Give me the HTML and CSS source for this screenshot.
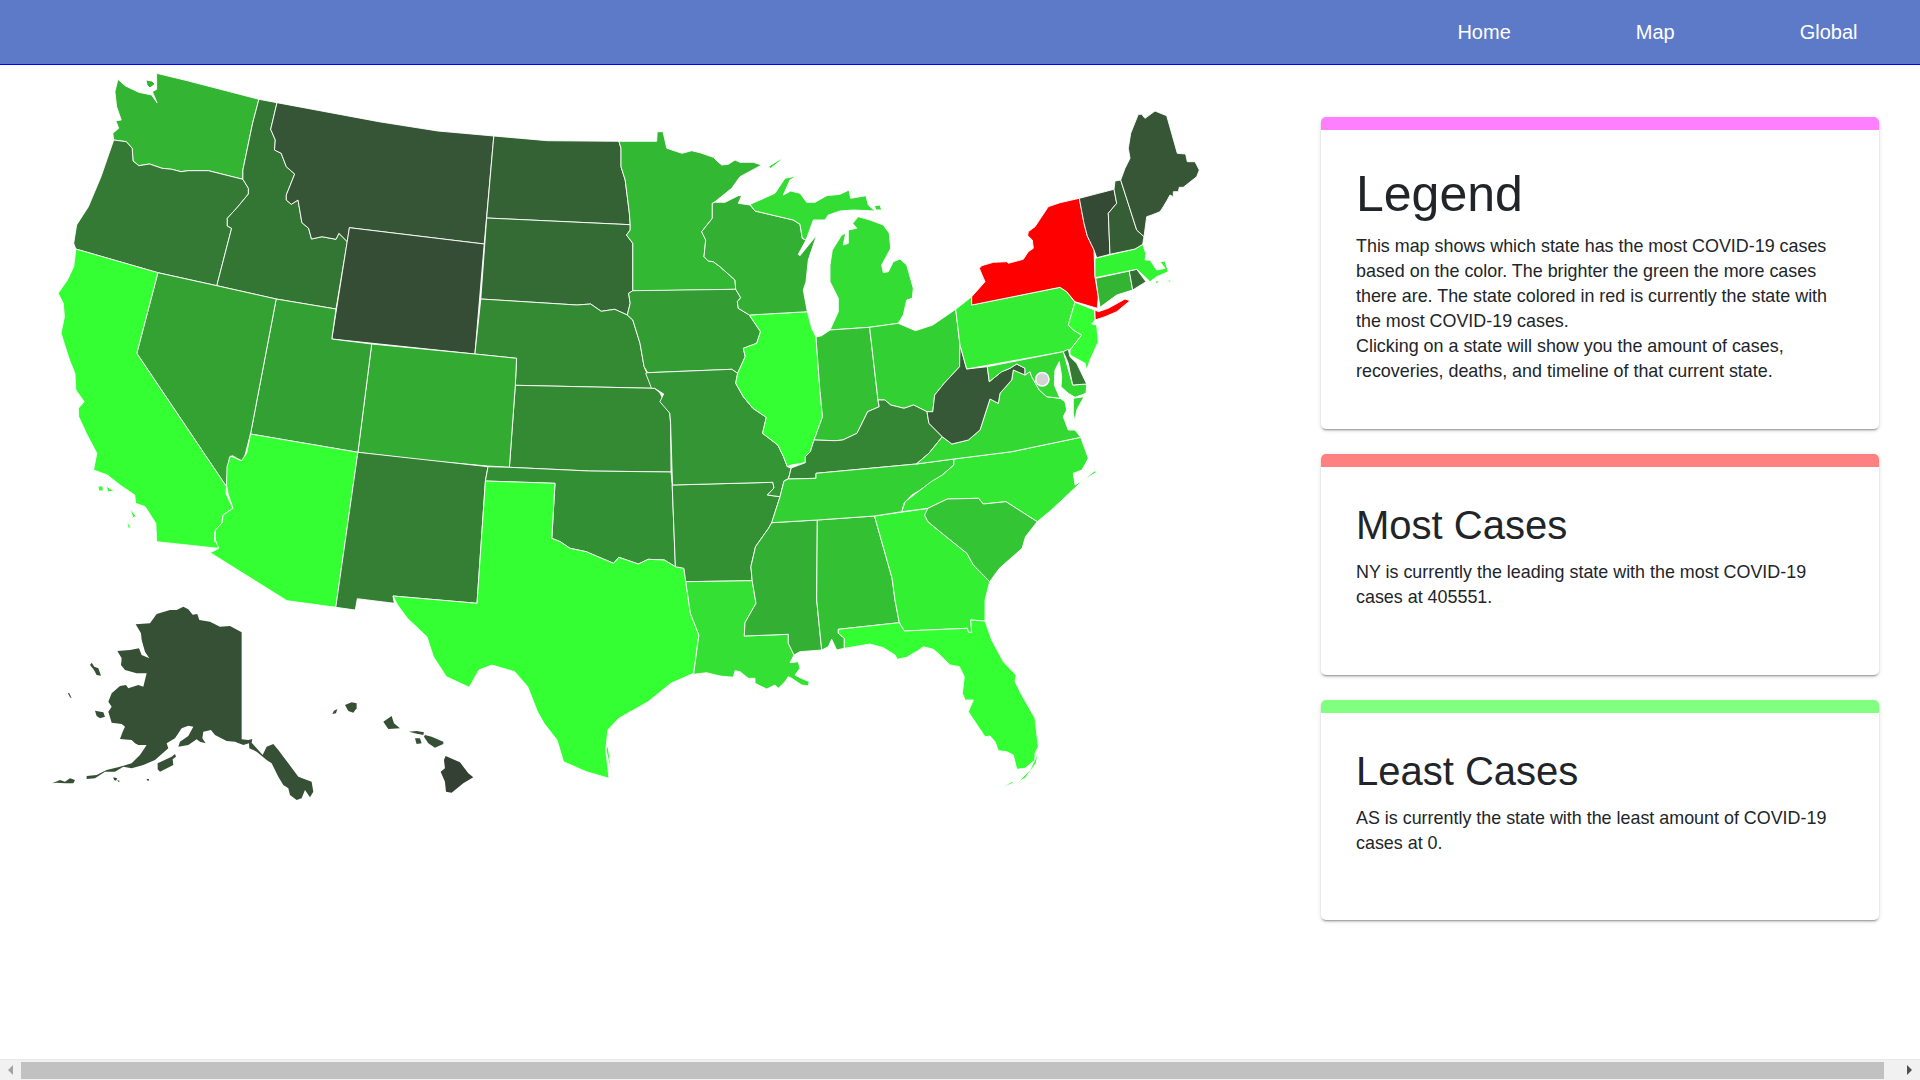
FILE: index.html
```html
<!DOCTYPE html>
<html lang="en">
  <head>
    <meta charset="UTF-8" />
    <meta name="viewport" content="width=device-width, initial-scale=1.0" />
    <title>COVID-19 Map</title>
    <link rel="stylesheet" href="styles.css">
  </head>
  <body>
    <!-- Top navigation -->
    <nav class="navbar">
      <a class="nav-link" href="#">Home</a>
      <a class="nav-link" href="#">Map</a>
      <a class="nav-link" href="#">Global</a>
    </nav>

    <main class="content">
      <!-- US map, coordinates are page pixels (hand traced) -->
      <div class="map-wrap">
        <svg class="map" viewBox="0 65 1321 800" xmlns="http://www.w3.org/2000/svg">
          <polygon class="state wa" points="156.6,73.3 187.3,80.7 258.9,99.3 252.6,123.3 242.9,170 242.9,179.3 208.4,170.7 188.2,170.7 181,171.7 171.8,169.3 162,168.3 149.5,164 138.9,165.7 133,161 132.2,148.3 126.3,141.7 113.7,140 112.8,133.3 118.7,128.3 115.8,120.7 121.2,120 116.6,106.7 114.9,91.7 117.9,79.3 125.5,86 138.9,92.3 151.6,95 157,102.7 152.4,91.7 156.6,89.3" />
          <polygon class="state wa" points="146,80 152,81 155,84 150,88 147,85" />
          <polygon class="state or" points="113.7,140 126.3,141.7 132.2,148.3 133,161 138.9,165.7 149.5,164 162,168.3 171.8,169.3 181,171.7 188.2,170.7 208.4,170.7 242.9,179.3 248.4,188.3 248.4,194 237.9,206.7 227.3,218.3 227.3,226 231.6,228.3 216.8,285.7 157.9,272.7 75.8,249 73.7,243.3 76.6,225 88.4,206.7 101,176.7" />
          <polygon class="state id" points="258.9,99.3 277,102.7 270.7,129.3 275.3,140 274.5,150 281.2,153.3 286.3,166.7 294.7,174 286.3,195 286.3,200 291.3,204.3 298,200 301.9,222.7 308.6,228.3 311.5,239 322,236.7 336,239.3 338.9,233.3 347.3,241.7 336,309 276.2,299 216.8,285.7 231.6,228.3 227.3,226 227.3,218.3 237.9,206.7 248.4,194 248.4,188.3 242.9,179.3 242.9,170 252.6,123.3" />
          <polygon class="state mt" points="277,102.7 378.9,121.7 437.8,131 493.8,136 484.2,244 349.4,227.7 347.3,241.7 338.9,233.3 336,239.3 322,236.7 311.5,239 308.6,228.3 301.9,222.7 298,200 291.3,204.3 286.3,200 286.3,195 294.7,174 286.3,166.7 281.2,153.3 274.5,150 275.3,140 270.7,129.3" />
          <polygon class="state wy" points="349.4,227.7 484.2,244 474.9,354 331.8,339" />
          <polygon class="state nd" points="493.8,136 547.3,140.7 618.9,141.3 621,148.3 621,166.7 625.2,180 629.4,213.3 630.2,224.7 486.7,218" />
          <polygon class="state sd" points="486.7,218 630.2,224.7 630.2,230 626.5,235 632.8,243.3 632.8,290.7 628.6,293.3 630.2,303.3 627.3,315 614.7,309.3 601.2,311.3 590.7,304 576.8,305 480.8,299" />
          <polygon class="state ne" points="480.8,299 576.8,305 590.7,304 601.2,311.3 614.7,309.3 627.3,315 632.8,320 640,343.3 644.1,366.7 648.3,376.7 654.7,388.3 515.3,385.3 516.6,358.3 474.9,354" />
          <polygon class="state ks" points="515.3,385.3 654.7,388.3 660,393 669.8,413.3 670.6,423.3 671,472 589.4,471 509.4,467.3" />
          <polygon class="state co" points="371.7,344 474.9,354 516.6,358.3 515.3,385.3 509.4,467.3 487.5,466 421,460 357.9,452.3" />
          <polygon class="state ut" points="276.2,299 336,309 331.8,339 371.7,344 357.9,452.3 250.5,434" />
          <polygon class="state nv" points="157.9,272.7 216.8,285.7 276.2,299 250.5,434 244.2,458.3 242,461 232.4,455.7 229.4,457.3 226.5,486.7 136.8,353.3" />
          <polygon class="state ca" points="75.8,249 157.9,272.7 136.8,353.3 226.5,486.7 226,493.3 232.8,508.3 223.1,515 221,526.7 214.7,531.7 214.7,541.7 219.8,542.7 218,548.3 156.6,541.7 155.8,523.3 145.2,506.7 135.6,503.3 134.7,495 120,485 107.4,475 93.5,470 96.8,453.3 86.3,433.3 78.7,416.7 78.3,408.3 84.2,401.7 75.8,390 74.9,373.3 69.5,360 61,333.3 64.4,316.7 63.2,303.3 58.1,293.3 67.4,280 73.7,266.7" />
          <polygon class="state ca" points="98,486 103,486 103,491 99,491" />
          <polygon class="state ca" points="106,486 114,491 108,492" />
          <polygon class="state ca" points="130,509 136,516 133,518" />
          <polygon class="state ca" points="127,521 131,528 128,528" />
          <polygon class="state az" points="250.5,434 357.9,452.3 335.8,607.3 287,600.7 210.2,552.7 218.7,548.3 215.4,540 215.4,530 222,523 223.2,515 233,508.3 228.4,495 226.5,485 227,466.7 230.4,456 241.5,460.7 246.7,453" />
          <polygon class="state nm" points="357.9,452.3 488,466.7 485.4,481 477,603.3 393,596 394.3,603.3 357.3,598.7 355.3,610 335.8,607.3" />
          <polygon class="state ok" points="488,466.7 509.4,467.3 589.4,471 671,472 672.2,485 675.4,566.7 664.3,560 648.1,559.3 638.3,564 618.8,557.3 613.6,563.3 599.3,557.3 586.3,551.7 570,548.3 560.3,541.7 551.8,538.3 555,483.3 485.4,481" />
          <polygon class="state tx" points="485.4,481 555,483.3 551.8,538.3 560.3,541.7 570,548.3 586.3,551.7 599.3,557.3 613.6,563.3 618.8,557.3 638.3,564 648.1,559.3 664.3,560 675.4,566.7 683.9,568.3 685.8,581.7 690.4,613.3 698.9,635 693.6,673.3 670.9,683.3 648.1,701.7 618.8,718.3 607.8,730 605.8,750 609,778.3 586.3,771.7 563.5,761.7 557,740 544,723.3 537.5,711.7 527.7,686.7 514.7,671.7 491.9,665 478.9,670 469.2,687.3 446.4,676.7 433.4,656.7 426.9,636.7 407.4,618.3 397.6,605 393,596 477,603.3" />
          <polygon class="state tx" points="618.8,720 608,745 612,776 606,750" />
          <polygon class="state ar" points="672.2,485 772.8,482.3 774,488 767.4,495 780,496.7 771.7,522.7 768.5,528.3 755.5,546.7 750.9,566.7 752.2,580.7 685.8,581.7 683.9,568.3 675.4,566.7" />
          <polygon class="state la" points="685.8,581.7 752.2,580.7 756,603.3 745,622.7 744.3,636 788.3,634.3 788.3,643.3 794,655 790,662.7 798.3,661.7 800,668.3 795,675 800,677.7 809.3,681.7 808.3,686 801.7,685 791.7,678.3 788.3,676.7 785,681.7 778.3,688.3 775,685 766.7,689 755,683.3 755,678.3 748.3,678.3 740,671.7 735,670.7 733.3,677.3 720,676 706.6,672.7 693.6,674.3 698.9,635 690.4,613.3" />
          <polygon class="state ms" points="771.7,522.7 817.3,520 816.7,600 821.7,650 800,651.7 794,655 788.3,643.3 788.3,634.3 744.3,636 745,622.7 756,603.3 752.2,580.7 750.9,566.7 755.5,546.7 768.5,528.3" />
          <polygon class="state al" points="817.3,520 874.5,516 892.1,578.3 895,600 899.3,622.7 838.3,629.3 838.3,633.3 844.3,638.3 844.3,648.3 836.7,650 831.7,639.3 828.3,646.7 821.7,650 816.7,600" />
          <polygon class="state ga" points="874.5,516 929.2,508.3 924.6,515 927.9,521.7 944.1,535 966.9,553.3 973.4,565 989.7,581.7 985.1,600 985,621 970.7,620 971.7,632.3 968.3,632.3 967.3,628.3 904.3,631 899.3,622.7 895,600 892.1,578.3" />
          <polygon class="state fl" points="838.3,629.3 899.3,622.7 904.3,631 967.3,628.3 968.3,632.3 971.7,632.3 970.7,620 985,621 991.7,640 1003.3,661.7 1016,675 1015,681.7 1021.7,695 1035,718.3 1038.3,746.7 1035,753.3 1035,760 1025,768.3 1016.7,769.3 1013.3,755 1006.7,751.7 998.3,750.7 995,741.7 990,736 985,736.7 968.3,711.7 973.3,700 966,700 968.3,707.3 962.3,693.3 964.3,676.7 959.3,666.7 950,665 940,655 933.3,649.3 923.3,646.7 919,650 906.7,657.3 897.3,659.3 895,655 883.3,647.7 870,644 844.3,648.3 844.3,638.3 838.3,633.3" />
          <polygon class="state fl" points="1038.3,752 1036,763.3 1025,778.3 1018.3,781.7 1030,770" />
          <polygon class="state fl" points="1001.7,787.7 1011.7,781.7 1014,782.7 1006,786" />
          <polygon class="state mn" points="618.9,141.3 656.6,141.3 657.2,131.7 663,131.7 666.8,148.3 682,153.3 691.7,150.7 700,152.7 713.3,157.3 716,160 721.7,165 728.3,164.3 735,160 740,162.3 753.3,162.3 761.7,165 740,176.7 731.7,188.3 715,201.7 712.3,203.3 712.3,218.3 701.7,231.7 705.7,240 704,256.7 708.3,261 713.3,261.7 720,266.7 735,280 735.7,289.3 640,291 632.8,290.7 632.8,243.3 626.5,235 630.2,230 630.2,224.7 629.4,213.3 625.2,180 621,166.7 621,148.3" />
          <polygon class="state mi-isle" points="768.3,166.7 781.7,158.3 780,161 770.7,168.3" />
          <polygon class="state ia" points="628.6,293.3 632.8,290.7 735.7,289.3 740.7,297.7 737.3,301.7 738.3,308.3 749.3,315 760.5,331.7 756.7,343.3 743.3,348.3 745.2,356.7 737.6,373.3 731.8,369.3 647.7,372.7 644.1,366.7 640,343.3 632.8,320 627.3,315 630.2,303.3" />
          <polygon class="state mo" points="647.7,372.7 731.8,369.3 737.6,373.3 735.7,383.3 743.3,396.7 752.9,408.3 766.3,417.3 762.5,433.3 777.8,445 783.5,456.7 787.3,466.7 791.2,468 788.5,478.3 784,481 780,496.7 767.4,495 774,488 772.8,482.3 672.5,485 670.6,423.3 669.8,413.3 659.9,401.7 663.7,394 654.7,388.3 651.5,388.3 645.7,373.3" />
          <polygon class="state il" points="749.3,315 807.3,311.7 811.7,328.3 816,337 819.9,390 822.5,416.7 814.1,440 810.3,451.7 805.3,456.7 805.3,462.7 791.2,465 787.3,466.7 783.5,456.7 777.8,445 762.5,433.3 766.3,417.3 752.9,408.3 743.3,396.7 735.7,383.3 737.6,373.3 745.2,356.7 743.3,348.3 756.7,343.3 760.5,331.7" />
          <polygon class="state wi" points="712.3,203.3 715,202.3 725,202.3 738.3,195.7 741.7,195.7 738.3,203.3 750,205 755,211 793.3,220 800,224.3 802.3,238.3 806,240 798.3,254.3 800,255.7 816.7,235 808.3,260 806,281.7 803.3,290 807.3,311.7 749.3,315 738.3,308.3 737.3,301.7 740.7,297.7 735.7,289.3 735,280 720,266.7 713.3,261.7 708.3,261 704,256.7 705.7,240 701.7,231.7 712.3,218.3" />
          <polygon class="state mi" points="750,204.3 760,200 775,193.3 785,178.3 796.7,176 790,180 783.3,195 790.7,191 800,193.3 806.7,202.3 815,202.3 826.7,195.7 840,194.3 849,190 850.7,198.3 866,195.7 868.3,205 875,211 853.3,210 840,211 828.3,215 825,220 813.3,220 806,240 802.3,238.3 800,224.3 793.3,220 755,211" />
          <polygon class="state mi" points="874.3,205.7 880,205 881.7,210 876,210" />
          <polygon class="state mi" points="852.7,223.3 858.3,216.7 870,220 883.3,225 889.3,233.3 890.7,248.3 881.7,265 883.3,272.7 888.3,271.7 893.3,261.7 900,259 906.7,265 913.3,288.3 912.3,298.3 906.7,300 903.3,315 898.3,323.3 869.6,327.3 830,330 838.3,311.7 838.3,298.3 830,281.7 830,265 832.3,250 841.7,235 845.7,233.3 843.3,245 848.3,243.3 848.3,230 856.7,228.3" />
          <polygon class="state in" points="816,337 821.7,335.7 830,330 869.6,327.3 878,400 879.2,406.7 867.7,411.7 857,433.3 842.8,440 835.2,440.7 814.1,440 822.5,416.7 819.9,390" />
          <polygon class="state oh" points="869.6,327.3 898.3,323.3 915.5,330.7 932.8,325 955.7,309.3 960,345 959.6,366.7 944.2,383.3 934.7,395 932.8,411.7 927,411.7 913.6,405 904,408.3 890.7,405 884.9,400 878,400" />
          <polygon class="state ky" points="878,400 884.9,400 890.7,405 904,408.3 913.6,405 927,411.7 928.9,423.3 942.3,436.7 928.9,453.3 916.3,464 816,473.3 816,478.3 788.5,479 791.2,468 805.3,462.7 805.3,456.7 810.3,451.7 814.1,440 835.2,440.7 842.8,440 857,433.3 867.7,411.7 879.2,406.7" />
          <polygon class="state tn" points="788.5,479 816,478.3 816,473.3 916.3,464 953.8,459 953.8,465 942.3,475 928.9,485 911.7,495 904,503.3 901.8,511.7 874.5,516 817.3,520 771.7,522.7 780,496.7 784,481" />
          <polygon class="state nc" points="953.8,459 1011.7,451.7 1080.7,437.3 1088.3,458.3 1082,470 1073.3,473.3 1075,485 1083.3,480 1051.4,510 1037.2,521.7 1006,501.7 983.2,504 978.6,498.3 947.4,499 927.9,508.3 901.8,511.7 905.1,501.7 931.1,481.7 942.3,475 953.8,465" />
          <polygon class="state nc" points="1092.7,456.7 1096,472.7 1083.3,480 1095,470.7" />
          <polygon class="state sc" points="927.9,508.3 947.4,499 978.6,498.3 983.2,504 1006,501.7 1037.2,521.7 1025.5,536.7 1022.1,548.3 999.4,568.3 989.7,581.7 973.4,565 966.9,553.3 944.1,535 927.9,521.7 924.6,515" />
          <polygon class="state va" points="916.3,464 928.9,453.3 942.3,436.7 951.9,444 968.3,440 980,430 990,399 998.3,403.3 1000,393.3 1011.7,380 1013.3,370 1025,375 1030,371.7 1031.7,376.7 1039.3,390 1046.7,396.7 1060,398.3 1065,401.7 1066.7,410 1063.3,416.7 1068.3,430 1075,430 1080.7,437.3 1011.7,451.7 953.8,459" />
          <polygon class="state va" points="1073.3,398.3 1084,396.7 1076.7,410 1075,421.7 1073.3,413.3" />
          <polygon class="state wv" points="960,345 966.7,369 987.3,366.7 989.3,381.7 1001.7,371.7 1010,368.3 1016.7,364 1025,368.3 1025,375 1013.3,370 1011.7,380 1000,393.3 998.3,403.3 990,399 980,430 968.3,440 951.9,444 942.3,436.7 928.9,423.3 927,411.7 932.8,411.7 934.7,395 944.2,383.3 959.6,366.7" />
          <polygon class="state pa" points="955.7,309.3 971.7,296.7 971.7,305 1060,287.3 1066.7,291.7 1075,302.3 1071.7,313.3 1068.3,325 1073.3,330 1081.7,335 1070,350 1063.3,351.7 966.7,369 960,345" />
          <polygon class="state ny" points="971.7,305 971.7,296.7 985,281.7 979.3,268.3 981.7,265.7 993.3,262.3 1006.7,261.7 1008.3,263.3 1023.3,259.3 1028.3,251.7 1033.3,248.3 1032.3,240 1027.7,235.7 1028.3,231.7 1035,226.7 1048.3,206.7 1060,202.7 1079.3,198.3 1084,223.3 1087.3,236 1094,250 1095,276.7 1098.3,296.7 1097.3,308.3 1075,301.7 1066.7,291.7 1060,287.3" />
          <polygon class="state ny" points="1095,320 1095,310 1098.3,311.7 1108.3,308.3 1125,299 1130,300.7 1116.7,311.7 1105,316.7" />
          <polygon class="state nj" points="1075,302.3 1094.3,310 1095,320 1091.7,324 1096.7,325 1098.3,341.7 1090,360 1086.7,370 1085,363.3 1070,355 1070,350 1081.7,335 1073.3,330 1068.3,325 1071.7,313.3" />
          <polygon class="state md" points="987.3,366.7 1063.3,351.7 1072.7,385 1086.7,384 1086,393.3 1075,397.3 1068.3,393.3 1061,386.7 1061.7,376.7 1059.3,361.7 1055,370 1054.3,385 1060,398.3 1046.7,396.7 1039.3,390 1031.7,376.7 1030,371.7 1025,375 1025,368.3 1016.7,364 1010,368.3 1001.7,371.7 989.3,381.7" />
          <polygon class="state de" points="1063.3,351.7 1068.3,349.3 1070,356.7 1076.7,363.3 1086.7,384 1072.7,385 1068.3,363.3" />
          <circle class="state dc" cx="1042.3" cy="379.3" r="6.7" />
          <polygon class="state ct" points="1095.7,278.3 1129.3,271 1132.7,290 1116.7,295 1100,307.3 1098.3,296.7" />
          <polygon class="state ri" points="1129.3,271 1136.7,269.3 1146,281.7 1132.7,290" />
          <polygon class="state ma" points="1095,258.3 1135,249 1142.7,244.3 1146,254 1145,260 1150,260 1156.7,270 1165,268.3 1160,261.7 1165,261 1168.3,271.7 1156.7,276.7 1150,281.7 1146.7,278.3 1136.7,269.3 1095,277.7" />
          <polygon class="state ma" points="1155,281.7 1160,280 1156.7,284" />
          <polygon class="state ma" points="1165,280.7 1170.7,280 1170.7,282.3" />
          <polygon class="state vt" points="1079.3,198.3 1114,189.3 1116.7,203.3 1108.3,213.3 1110,254.3 1096.7,257.7 1094,250 1087.3,236 1084,223.3" />
          <polygon class="state nh" points="1114,189.3 1115,181 1120.7,180 1136.7,230 1144,236.7 1142.7,244.3 1135,249 1110,254.3 1108.3,213.3 1116.7,203.3" />
          <polygon class="state me" points="1120.7,180 1125,168.3 1130,158.3 1128.3,148.3 1130.7,133.3 1138.3,114.3 1141.7,114.3 1145,118.3 1155,111 1166.7,115.7 1177.3,153.3 1185.7,154 1187.3,161.7 1195,161.7 1199.3,170 1196.7,176.7 1183.3,187.3 1179.3,187.3 1178.3,191.7 1173.3,191.7 1173.3,196.7 1170,195 1167.3,200 1163.3,206.7 1160,211.7 1151.7,215 1146.7,216.7 1144,236.7 1136.7,230" />

          <!-- Alaska and Hawaii, traced at 3x -->
          <g transform="translate(40 600) scale(0.3333)">
            <polygon class="ak" points="430,20 445,28 458,44 472,42 478,60 510,65 540,80 570,78 605,97 605,418 625,420 637,417 635,428 668,465 680,440 700,432 715,450 745,490 775,530 815,545 820,575 810,592 795,570 785,595 770,600 750,585 745,565 730,555 715,530 695,490 680,480 650,455 628,445 627,430 610,435 585,425 560,423 525,405 513,390 490,395 487,415 497,430 480,425 470,418 445,435 415,440 420,425 445,408 460,380 445,377 425,385 405,415 380,430 385,445 345,480 310,495 275,505 250,500 225,515 195,515 165,535 140,537 140,528 170,525 200,510 240,500 275,490 300,465 320,435 295,435 285,430 275,420 240,417 248,395 255,380 245,372 215,368 205,335 215,320 205,305 215,280 240,258 258,255 265,265 295,255 310,260 320,220 290,220 255,210 243,195 245,175 232,153 270,150 297,145 305,165 328,175 315,155 305,120 303,100 287,73 330,70 350,42 390,30 410,30" />
            <polygon class="ak" points="150,195 155,188 163,200 175,205 183,227 170,225 162,210" />
            <polygon class="ak" points="83,278 88,280 95,295 90,292" />
            <polygon class="ak" points="165,332 190,337 195,350 180,355 170,348" />
            <polygon class="ak" points="353,490 395,470 405,462 408,470 398,478 400,495 360,515 353,508" />
            <polygon class="ak" points="37,550 60,540 75,545 90,535 105,540 100,550 75,550 50,548" />
            <polygon class="ak" points="220,532 232,535 228,542 222,540" />
            <polygon class="ak" points="232,540 240,543 235,546" />
            <polygon class="ak" points="320,537 327,537 326,543 321,541" />
            <polygon class="hi" points="1217,468 1260,487 1285,520 1300,532 1270,550 1235,578 1218,575 1215,545 1202,515 1215,505 1212,480" />
            <polygon class="hi-small" points="1155,405 1175,410 1210,425 1210,432 1185,443 1165,430 1152,410" />
            <polygon class="hi-small" points="1125,415 1140,415 1145,430 1130,432" />
            <polygon class="hi-small" points="1107,395 1130,393 1152,397 1150,405 1125,400" />
            <polygon class="hi-small" points="1055,348 1062,370 1080,385 1045,387 1030,365" />
            <polygon class="hi-small" points="915,315 935,307 950,310 950,325 940,338 925,333" />
            <polygon class="hi-small" points="882,332 892,327 888,340 877,342" />
          </g>
        </svg>
      </div>

      <!-- Info cards -->
      <aside class="sidebar">
        <section class="card card-legend">
          <div class="card-bar bar-pink"></div>
          <div class="card-body">
            <h1 class="card-title-lg">Legend</h1>
            <p class="card-text">
              This map shows which state has the most COVID-19 cases based on the color. The brighter the green the more cases there are. The state colored in red is currently the state with the most COVID-19 cases.<br />
              Clicking on a state will show you the amount of cases, recoveries, deaths, and timeline of that current state.
            </p>
          </div>
        </section>

        <section class="card card-stat">
          <div class="card-bar bar-red"></div>
          <div class="card-body">
            <h2 class="card-title">Most Cases</h2>
            <p class="card-text">NY is currently the leading state with the most COVID-19 cases at 405551.</p>
          </div>
        </section>

        <section class="card card-stat">
          <div class="card-bar bar-green"></div>
          <div class="card-body">
            <h2 class="card-title">Least Cases</h2>
            <p class="card-text">AS is currently the state with the least amount of COVID-19 cases at 0.</p>
          </div>
        </section>
      </aside>
    </main>

    <!-- Horizontal scrollbar of the page -->
    <div class="scrollbar">
      <div class="sb-btn"><span class="sb-arrow-left"></span></div>
      <div class="sb-thumb"></div>
      <div class="sb-btn"><span class="sb-arrow-right"></span></div>
    </div>
  </body>
</html>
```

FILE: styles.css
```css
* {
  box-sizing: border-box;
}
body {
  margin: 0;
  height: 100vh;
  overflow: hidden;
  display: flex;
  flex-direction: column;
  font-family: "Liberation Sans", Arial, sans-serif;
  font-size: 16px;
  color: #212529;
  background-color: #fff;
}

/* Navbar */
.navbar {
  flex: 0 0 65px;
  display: flex;
  justify-content: flex-end;
  align-items: center;
  background-color: #5c7ac8;
  border-bottom: 1px solid #0000ff;
}
.nav-link {
  padding: 0 62.5px;
  color: #fff;
  font-size: 20px;
  text-decoration: none;
}

/* Main area */
.content {
  flex: 1;
  display: flex;
  min-height: 0;
}
.map-wrap {
  flex: 0 0 1321px;
}
.map {
  display: block;
  width: 1321px;
  height: 800px;
}
.sidebar {
  flex: 0 0 558px;
  display: flex;
  flex-direction: column;
  gap: 25px;
  padding-top: 52px;
}

/* Cards */
.card {
  background-color: #fff;
  border-radius: 5px;
  overflow: hidden;
  box-shadow: 0 2px 2px 0 rgba(0, 0, 0, 0.14), 0 3px 1px -2px rgba(0, 0, 0, 0.2), 0 1px 5px 0 rgba(0, 0, 0, 0.12);
}
.card-legend {
  height: 312px;
}
.card-stat {
  height: 220.5px;
}
.card-bar {
  height: 13px;
}
.bar-pink {
  background-color: #ff80ff;
}
.bar-red {
  background-color: #ff8080;
}
.bar-green {
  background-color: #80ff80;
}
.card-body {
  padding: 34px 35px 35px;
}
.card-title-lg,
.card-title {
  margin: 0;
  font-weight: 400;
  line-height: 1.2;
}
.card-title-lg {
  font-size: 50px;
  margin-bottom: 10px;
}
.card-title {
  font-size: 40px;
  margin-bottom: 11px;
}
.card-text {
  margin: 0;
  font-size: 17.9px;
  line-height: 25px;
}

/* Map states */
.state {
  stroke: #fff;
  stroke-width: 0.9;
  stroke-linejoin: round;
}
.wa { fill: #33b533; }
.or { fill: #347a34; }
.id { fill: #337533; }
.mt { fill: #365536; }
.wy { fill: #354c35; }
.nd { fill: #356235; }
.sd { fill: #346a34; }
.ne { fill: #338a33; }
.ks { fill: #338a33; }
.co { fill: #33ab33; }
.ut { fill: #33a033; }
.nv { fill: #33a233; }
.ca, .az, .tx, .il, .fl, .nj { fill: #33ff33; }
.nm { fill: #347f34; }
.ok { fill: #338f33; }
.mn { fill: #33b833; }
.ia { fill: #339c33; }
.mo { fill: #339533; }
.ar { fill: #339033; }
.la { fill: #33e033; }
.wi { fill: #33b033; }
.mi, .mi-isle { fill: #33dd33; }
.in { fill: #33c033; }
.oh { fill: #33d033; }
.ky { fill: #348634; }
.tn { fill: #33d033; }
.ms { fill: #33b033; }
.al { fill: #33c033; }
.ga { fill: #33f033; }
.sc { fill: #33c533; }
.nc { fill: #33e833; }
.va { fill: #33d833; }
.wv { fill: #365836; }
.pa { fill: #33ec33; }
.ny { fill: #ff0000; }
.de { fill: #347a34; }
.md { fill: #33d833; }
.dc { fill: #d3d3d3; stroke-width: 1.5; }
.ct { fill: #33b533; }
.ri { fill: #346e34; }
.ma { fill: #33f433; }
.vt { fill: #354a35; }
.nh { fill: #355e35; }
.me { fill: #365636; }
.ak { fill: #365036; }
.hi { fill: #354035; }
.hi-small { fill: #365036; }

/* Scrollbar */
.scrollbar {
  flex: 0 0 21px;
  display: flex;
  align-items: center;
  background-color: #f1f1f1;
  border-top: 1px solid #e9e9e9;
}
.sb-btn {
  flex: 0 0 21px;
  display: flex;
  justify-content: center;
}
.sb-thumb {
  flex: 1;
  height: 17px;
  margin-right: 15px;
  background-color: #c1c1c1;
}
.sb-arrow-left,
.sb-arrow-right {
  width: 0;
  height: 0;
  border-top: 5px solid transparent;
  border-bottom: 5px solid transparent;
}
.sb-arrow-left {
  border-right: 5px solid #a3a3a3;
}
.sb-arrow-right {
  border-left: 5px solid #505050;
}
```
